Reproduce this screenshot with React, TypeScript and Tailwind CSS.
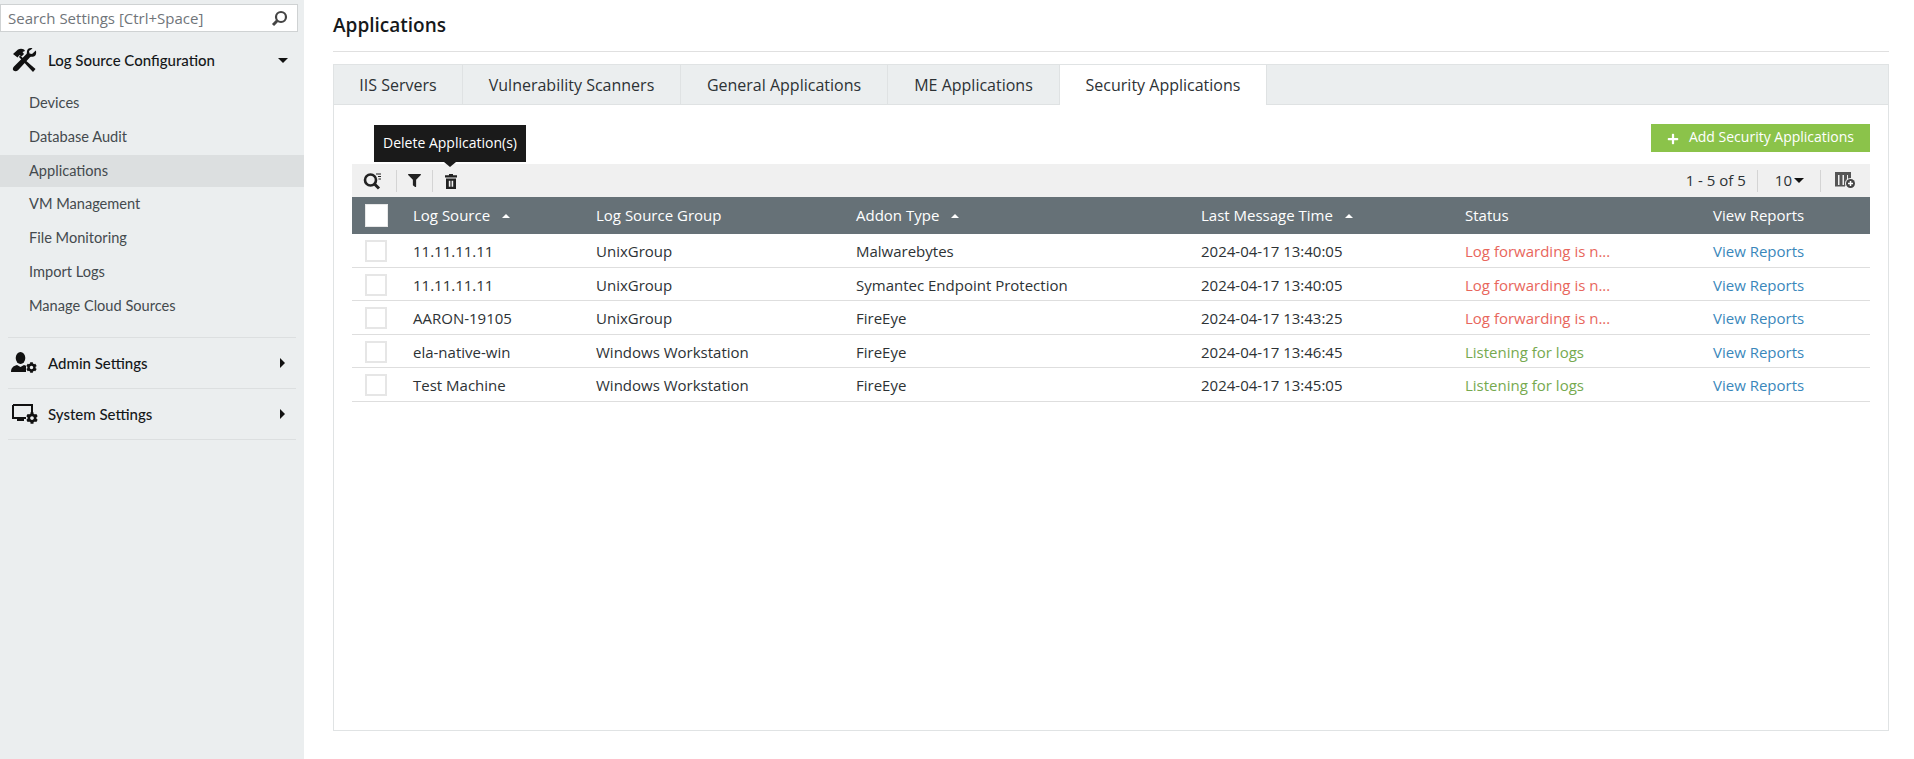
import React from "react";
import { FaCog, FaFilter, FaPlus } from "react-icons/fa";

const os = "font-['Open_Sans',sans-serif]";
const lato = "font-['Lato',sans-serif]";

const Side = ({ label, active }: { label: string; active?: boolean }) => (
  <div className={`h-[32px] mb-[1.8px] flex items-center pl-[29px] text-[14.6px] text-[#444a4e] ${lato} ${active ? "bg-[#dcdfe0]" : ""}`}>{label}</div>
);

const Up = () => <span className="ml-[12px] inline-block w-0 h-0 border-x-[4px] border-x-transparent border-b-[4px] border-b-white" />;

const Right = () => <span className="w-0 h-0 border-y-[5px] border-y-transparent border-l-[5px] border-l-[#111]" />;

const Check = () => <div className="w-[22px] h-[22px] border-2 border-[#e6e6e6] bg-white" />;

const rows = [
  ["11.11.11.11", "UnixGroup", "Malwarebytes", "2024-04-17 13:40:05", "Log forwarding is n...", false],
  ["11.11.11.11", "UnixGroup", "Symantec Endpoint Protection", "2024-04-17 13:40:05", "Log forwarding is n...", false],
  ["AARON-19105", "UnixGroup", "FireEye", "2024-04-17 13:43:25", "Log forwarding is n...", false],
  ["ela-native-win", "Windows Workstation", "FireEye", "2024-04-17 13:46:45", "Listening for logs", true],
  ["Test Machine", "Windows Workstation", "FireEye", "2024-04-17 13:45:05", "Listening for logs", true],
] as const;

const cols = "grid grid-cols-[61px_183px_260px_345px_264px_248px_1fr] items-center";

export default function App() {
  return (
    <div className={`flex w-[1914px] h-[759px] overflow-hidden bg-white ${os}`}>
      <aside className="w-[304px] shrink-0 bg-[#ebeeef] pt-[4px]">
        <div className="w-[298px] h-[28px] bg-white border border-[#cfd2d3] flex items-center justify-between pl-[7px] pr-[9px]">
          <span className={`text-[15px] text-[#70757a] ${os}`}>Search Settings [Ctrl+Space]</span>
          <svg width="17" height="17" viewBox="0 0 17 17" fill="none" stroke="#444" strokeWidth="2.2"><circle cx="10" cy="7" r="5" /><path d="M6.2 10.8 2 15" strokeWidth="3" /></svg>
        </div>
        <div className="h-[50px] mt-[3px] flex items-center pl-[12px] pr-[16px]">
          <svg width="25" height="25" viewBox="0 0 25 25" fill="#111">
            <path d="M1 6 6 1.500c2-1 4-1 6 0l1 1.500-2.500 1 1.500 2-2.500 2.500-2-1.500L5.500 9.500z" />
            <path d="M8 7.500 23.500 21l-2.500 3L7 9z" />
            <path d="M23.800 2.500l-3.800 3.500-2.500-.5-.5-2.500L20.500.5c-2.500-1-5 0-5.500 2.500-.2 1 0 2-.3 2.700L2 18.500c-1.500 1.500-1.500 3 -.5 4s3 1.300 4.500-.2l12-13c1-.7 2-.3 3-.5 2.700-.6 3.800-3.300 2.800-6.300z" />
          </svg>
          <span className={`ml-[11px] flex-1 text-[15px] font-medium text-[#15181a] ${lato}`}>Log Source Configuration</span>
          <span className="w-0 h-0 border-x-[5px] border-x-transparent border-t-[5px] border-t-[#111]" />
        </div>
        <div className="mt-[2px]">
          <Side label="Devices" />
          <Side label="Database Audit" />
          <Side label="Applications" active />
          <Side label="VM Management" />
          <Side label="File Monitoring" />
          <Side label="Import Logs" />
          <Side label="Manage Cloud Sources" />
        </div>
        <div className="mx-[8px] mt-[15px] border-t border-[#dcdfe0] h-[51px] flex items-center pr-[11px]">
          <span className="relative ml-[3px] w-[26px] h-[21px]">
            <svg width="26" height="21" viewBox="0 0 26 21" fill="#111">
              <ellipse cx="9.500" cy="6" rx="4.800" ry="6" />
              <path d="M0 20c0-4 2-6 6-7l3.500 2 3.500-2 2 .8V20z" />
            </svg>
            <FaCog className="absolute right-0 bottom-0 w-[11px] h-[11px] text-[#111]" />
          </span>
          <span className={`ml-[11px] flex-1 text-[15px] font-medium text-[#15181a] ${lato}`}>Admin Settings</span>
          <Right />
        </div>
        <div className="mx-[8px] border-t border-[#dcdfe0] border-b h-[52px] flex items-center pr-[11px]">
          <span className="relative ml-[4px] w-[26px] h-[20px]">
            <svg width="26" height="20" viewBox="0 0 26 20" fill="none">
              <path d="M1 1h19V9" stroke="#111" strokeWidth="2" />
              <path d="M1 1v13h13" stroke="#111" strokeWidth="2" />
              <path d="M5 15h7v2H5z" fill="#111" />
            </svg>
            <FaCog className="absolute right-0 bottom-0 w-[12px] h-[12px] text-[#111]" />
          </span>
          <span className={`ml-[10px] flex-1 text-[15px] font-medium text-[#15181a] ${lato}`}>System Settings</span>
          <Right />
        </div>
      </aside>

      <main className="flex-1 pl-[29px] pr-[25px] min-w-0">
        <h1 className="h-[52px] pt-[12px] text-[19px] leading-[26px] font-semibold text-[#16191b] border-b border-[#e0e0e0]">Applications</h1>
        <div className="mt-[12px] h-[667px] border border-[#e0e3e4] flex flex-col">
          <div className="h-[40px] bg-[#ebeeef] border-b border-[#dfe2e3] flex text-[16px] text-[#2d3235] shrink-0">
            <div className="w-[129px] flex items-center justify-center border-r border-[#dfe2e3]">IIS Servers</div>
            <div className="w-[218px] flex items-center justify-center border-r border-[#dfe2e3]">Vulnerability Scanners</div>
            <div className="w-[207px] flex items-center justify-center border-r border-[#dfe2e3]">General Applications</div>
            <div className="w-[172px] flex items-center justify-center border-r border-[#dfe2e3]">ME Applications</div>
            <div className="w-[207px] h-[40px] flex items-center justify-center bg-white border-r border-[#dfe2e3]">Security Applications</div>
          </div>

          <div className="px-[18px] relative">
            <div className="h-[59px] flex justify-end items-start pt-[19px]">
              <button className="w-[219px] h-[28px] pb-[3px] bg-[#8bc34a] text-white text-[14px] flex items-center justify-center">
                <FaPlus className="w-[12px] h-[12px] mr-[10px] mt-[4px]" />Add Security Applications
              </button>
            </div>

            <div className="absolute left-[40px] top-[20px] pb-[2px] bg-[#1a1a1a] text-white text-[14px] h-[37px] w-[152px] flex items-center justify-center">
              Delete Application(s)
              <span className="absolute left-[70px] -bottom-[5px] w-0 h-0 border-x-[6px] border-x-transparent border-t-[5px] border-t-[#1a1a1a]" />
            </div>

            <div className="h-[33px] bg-[#f0f0f0] flex items-center">
              <svg className="ml-[11px]" width="19" height="18" viewBox="0 0 19 18" fill="none" stroke="#222">
                <circle cx="7.500" cy="8" r="5.500" strokeWidth="2.600" />
                <path d="M11.500 12 16 16.500" strokeWidth="3" />
                <path d="M13 2h5M15 4.500h3M15.500 7h2.500" strokeWidth="1" />
              </svg>
              <span className="ml-[14px] w-px h-[22px] bg-[#d4d4d4]" />
              <FaFilter className="ml-[11px] w-[13px] h-[13px] text-[#222]" />
              <span className="ml-[11px] w-px h-[22px] bg-[#d4d4d4]" />
              <svg className="ml-[12px] mt-[2px]" width="12" height="15" viewBox="0 0 12 15" fill="#222">
                <path d="M4 0h4v1.300h4V3.500H0V1.300h4z" />
                <path d="M1 4.500h10V15H1zM3.800 6.800v6h1.600v-6zM6.600 6.800v6h1.600v-6z" fillRule="evenodd" />
              </svg>
              <div className="ml-auto flex items-center text-[15px] text-[#2d3235]">
                <span>1 - 5 of 5</span>
                <span className="ml-[11px] w-px h-[22px] bg-[#d4d4d4]" />
                <span className="ml-[17px]">10</span>
                <span className="ml-[2px] w-0 h-0 border-x-[5px] border-x-transparent border-t-[5px] border-t-[#111]" />
                <span className="ml-[16px] w-px h-[22px] bg-[#d4d4d4]" />
                <svg className="ml-[14px] mr-[14px]" width="21" height="17" viewBox="0 0 21 17">
                  <path d="M0 0h16v3H0zM0 3h3v11H0zM4.500 3h3v11h-3zM9 3h3v11H9zM13 3h3v6h-3zM0 13h10v1.500H0z" fill="#555" />
                  <circle cx="15.500" cy="11.500" r="5.500" fill="#f0f0f0" />
                  <circle cx="15.500" cy="11.500" r="4.500" fill="#444" />
                  <path d="M13 11.500h5M15.500 9v5" stroke="#fff" strokeWidth="1.500" />
                </svg>
              </div>
            </div>

            <div className={`${cols} h-[37px] bg-[#667177] text-white text-[15px]`}>
              <div className="pl-[13px]"><div className="w-[23px] h-[23px] bg-white border border-[#e8e8e8]" /></div>
              <div className="flex items-center">Log Source<Up /></div>
              <div>Log Source Group</div>
              <div className="flex items-center">Addon Type<Up /></div>
              <div className="flex items-center">Last Message Time<Up /></div>
              <div>Status</div>
              <div>View Reports</div>
            </div>

            {rows.map((r, i) => (
              <div key={i} className={`${cols} h-[33.5px] pt-[2px] border-b border-[#dedede] text-[15px] text-[#2d3235]`}>
                <div className="pl-[13px]"><Check /></div>
                <div>{r[0]}</div>
                <div>{r[1]}</div>
                <div>{r[2]}</div>
                <div>{r[3]}</div>
                <div className={r[5] ? "text-[#76a94f]" : "text-[#e8665c]"}>{r[4]}</div>
                <div className="text-[#3a87bb]">View Reports</div>
              </div>
            ))}
          </div>
        </div>
      </main>
    </div>
  );
}
